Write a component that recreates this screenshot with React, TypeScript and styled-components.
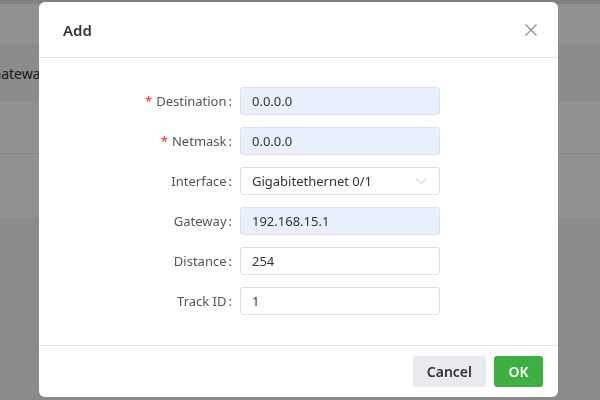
import React from 'react';
import styled, { createGlobalStyle } from 'styled-components';

const GlobalStyle = createGlobalStyle`
    html, body {
        margin: 0;
        padding: 0;
        width: 600px;
        height: 400px;
        overflow: hidden;
        background: #f0f2f5;
        font-family: "Noto Sans", "Open Sans", sans-serif;
    }
`;

const Page = styled.div`
    width: 600px;
    height: 400px;
    display: flex;
    flex-direction: column;
    background: #f0f2f5;
`;

const TopBar = styled.div`
    height: 4px;
    background: #e0e2e6;
`;

const TableCard = styled.div`
    background: #fff;
    height: 214px;
    display: flex;
    flex-direction: column;
`;

const TableGap = styled.div`
    height: 41px;
    border-bottom: 1px solid #f0f0f0;
`;

const TableHead = styled.div`
    height: 55px;
    background: #f5f5f5;
    display: flex;
    align-items: center;
    font-size: 14px;
    color: #333;
    overflow: hidden;
`;

const HeadCell = styled.div`
    margin-left: -9px;
    white-space: nowrap;
`;

const TableRow = styled.div`
    height: 52px;
    border-bottom: 1px solid #e8e8e8;
`;

const Overlay = styled.div`
    position: fixed;
    inset: 0;
    background: rgba(0, 0, 0, 0.43);
    display: flex;
    align-items: flex-start;
`;

const Modal = styled.div`
    margin: 2px 0 0 39px;
    width: 519px;
    height: 395px;
    background: #fff;
    border-radius: 6px;
    display: flex;
    flex-direction: column;
    overflow: hidden;
`;

const Header = styled.div`
    height: 55px;
    border-bottom: 1px solid #e8e8e8;
    display: flex;
    align-items: center;
    justify-content: space-between;
    padding: 0 15px 0 24px;
`;

const Title = styled.div`
    font-size: 15px;
    font-weight: 600;
    color: #333;
`;

const CloseButton = styled.button`
    width: 24px;
    height: 24px;
    border: none;
    background: none;
    padding: 0;
    display: flex;
    align-items: center;
    justify-content: center;
    cursor: pointer;
`;

const Body = styled.div`
    flex: 1;
    display: flex;
    flex-direction: column;
    gap: 12px;
    padding: 29px 0 0 81px;
    border-bottom: 1px solid #e8e8e8;
`;

const Row = styled.div`
    display: flex;
    align-items: center;
    height: 28px;
`;

const Label = styled.label`
    width: 120px;
    text-align: right;
    font-size: 13px;
    color: #555;
    padding-right: 8px;
    box-sizing: border-box;
    white-space: nowrap;
`;

const Required = styled.span`
    color: #f5222d;
    margin-right: 4px;
`;

const Colon = styled.span`
    margin-left: 2px;
`;

const Input = styled.input<{ $filled?: boolean }>`
    width: 200px;
    height: 28px;
    box-sizing: border-box;
    border: 1px solid ${(p) => (p.$filled ? '#dde3ee' : '#dcdfe6')};
    border-radius: 3px;
    background: ${(p) => (p.$filled ? '#e8f0fe' : '#fff')};
    padding: 0 11px;
    font-family: inherit;
    font-size: 13px;
    color: #333;
    outline: none;
`;

const Select = styled.div`
    width: 200px;
    height: 28px;
    box-sizing: border-box;
    border: 1px solid #dcdfe6;
    border-radius: 3px;
    padding: 0 12px 0 11px;
    display: flex;
    align-items: center;
    justify-content: space-between;
    font-size: 13px;
    color: #333;
`;

const Footer = styled.div`
    height: 51px;
    display: flex;
    align-items: center;
    justify-content: flex-end;
    gap: 8px;
    padding: 0 15px 0 0;
`;

const Button = styled.button<{ $primary?: boolean }>`
    height: 31px;
    border: none;
    border-radius: 3px;
    padding: 0 14px;
    font-family: inherit;
    font-size: 14px;
    font-weight: 600;
    color: ${(p) => (p.$primary ? '#fff' : '#333')};
    background: ${(p) => (p.$primary ? '#3cb043' : '#e9eaef')};
    min-width: ${(p) => (p.$primary ? '49px' : '72px')};
    cursor: pointer;
`;

const fields = [
    { label: 'Destination', value: '0.0.0.0', required: true, filled: true },
    { label: 'Netmask', value: '0.0.0.0', required: true, filled: true },
    { label: 'Interface', value: 'Gigabitethernet 0/1', select: true },
    { label: 'Gateway', value: '192.168.15.1', filled: true },
    { label: 'Distance', value: '254' },
    { label: 'Track ID', value: '1' },
];

export default function App() {
    return (
        <>
            <GlobalStyle />
            <Page>
                <TopBar />
                <TableCard>
                    <TableGap />
                    <TableHead>
                        <HeadCell>Gateway</HeadCell>
                    </TableHead>
                    <TableRow />
                </TableCard>
            </Page>
            <Overlay>
                <Modal>
                    <Header>
                        <Title>Add</Title>
                        <CloseButton aria-label="close">
                            <svg width="12" height="12" viewBox="0 0 12 12">
                                <path d="M0.5 0.5L11.5 11.5M11.5 0.5L0.5 11.5" stroke="#8c8c8c" strokeWidth="1.2" fill="none" />
                            </svg>
                        </CloseButton>
                    </Header>
                    <Body>
                        {fields.map((f) => (
                            <Row key={f.label}>
                                <Label>
                                    {f.required && <Required>*</Required>}
                                    {f.label}
                                    <Colon>:</Colon>
                                </Label>
                                {f.select ? (
                                    <Select>
                                        <span>{f.value}</span>
                                        <svg width="12" height="8" viewBox="0 0 12 8">
                                            <path d="M1 1.5L6 6.5L11 1.5" stroke="#c0c4cc" strokeWidth="1" fill="none" />
                                        </svg>
                                    </Select>
                                ) : (
                                    <Input $filled={f.filled} defaultValue={f.value} />
                                )}
                            </Row>
                        ))}
                    </Body>
                    <Footer>
                        <Button>Cancel</Button>
                        <Button $primary>OK</Button>
                    </Footer>
                </Modal>
            </Overlay>
        </>
    );
}
